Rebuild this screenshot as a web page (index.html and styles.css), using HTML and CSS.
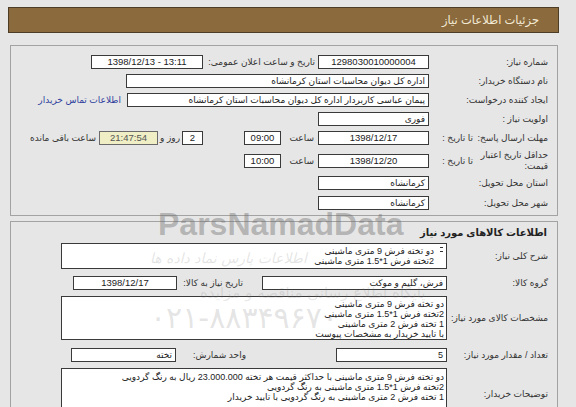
FILE: index.html
```html
<!DOCTYPE html>
<html lang="fa" dir="rtl">
<head>
<meta charset="utf-8">
<title>جزئیات اطلاعات نیاز</title>
<link rel="stylesheet" href="styles.css">
</head>
<body>
<div class="page">
  <div class="header"><span class="title">جزئیات اطلاعات نیاز</span></div>

  <div class="box info">
    <div class="row">
      <div class="lbl">شماره نیاز:</div>
      <div class="field f-short center num">1298030010000004</div>
      <div class="lbl-mid">تاریخ و ساعت اعلان عمومی:</div>
      <div class="field f-pub center num">1398/12/13 - 13:11</div>
    </div>
    <div class="row">
      <div class="lbl">نام دستگاه خریدار:</div>
      <div class="field f-long">اداره کل دیوان محاسبات استان کرمانشاه</div>
    </div>
    <div class="row">
      <div class="lbl">ایجاد کننده درخواست:</div>
      <div class="field f-long2">پیمان عباسی کاربردار اداره کل دیوان محاسبات استان کرمانشاه</div>
      <a class="link">اطلاعات تماس خریدار</a>
    </div>
    <div class="row">
      <div class="lbl">اولویت نیاز :</div>
      <div class="field f-short">فوری</div>
    </div>
    <div class="row row-deadline">
      <div class="lbl split"><span class="main">مهلت ارسال پاسخ:</span><span class="sub">تا تاریخ :</span></div>
      <div class="field f-short center num">1398/12/17</div>
      <div class="saat">ساعت</div>
      <div class="field f-time center num">09:00</div>
      <div class="field f-days center num">2</div>
      <div class="days-lbl">روز و</div>
      <div class="field f-remain center num">21:47:54</div>
      <div class="remain-lbl">ساعت باقی مانده</div>
    </div>
    <div class="row row-tall">
      <div class="lbl split"><span class="main wrap">حداقل تاریخ اعتبار قیمت:</span><span class="sub">تا تاریخ :</span></div>
      <div class="field f-short center num">1398/12/20</div>
      <div class="saat">ساعت</div>
      <div class="field f-time center num">10:00</div>
    </div>
    <div class="row row-loose">
      <div class="lbl">استان محل تحویل:</div>
      <div class="field f-short">کرمانشاه</div>
    </div>
    <div class="row row-loose">
      <div class="lbl">شهر محل تحویل:</div>
      <div class="field f-short">کرمانشاه</div>
    </div>
  </div>

  <div class="box goods">
    <div class="g-title">اطلاعات کالاهای مورد نیاز</div>
    <div class="g-row g-summary">
      <div class="g-lbl">شرح کلی نیاز:</div>
      <div class="area area-summary">
        <div class="line">دو تخته فرش 9 متری ماشینی</div>
        <div class="line">2تخته فرش 1*1.5 متری ماشینی</div>
      </div>
    </div>
    <div class="g-row g-group">
      <div class="g-lbl">گروه کالا:</div>
      <div class="field f-group">فرش، گلیم و موکت</div>
      <div class="lbl-need">تاریخ نیاز به کالا:</div>
      <div class="field f-need center num">1398/12/17</div>
    </div>
    <div class="g-row g-spec">
      <div class="g-lbl">مشخصات کالای مورد نیاز:</div>
      <div class="area area-spec">
        <div class="line">دو تخته فرش 9 متری ماشینی</div>
        <div class="line">2تخته فرش 1*1.5 متری ماشینی</div>
        <div class="line">1 تخته فرش 2 متری ماشینی</div>
        <div class="line">با تایید خریدار به مشخصات پیوست</div>
      </div>
    </div>
    <div class="g-row g-qty">
      <div class="g-lbl">تعداد / مقدار مورد نیاز:</div>
      <div class="field f-qty">5</div>
      <div class="lbl-unit">واحد شمارش:</div>
      <div class="field f-unit">تخته</div>
    </div>
    <div class="g-row g-desc">
      <div class="g-lbl">توضیحات خریدار:</div>
      <div class="area area-desc">
        <div class="line">دو تخته فرش 9 متری ماشینی با حداکثر قیمت هر تخته 23.000.000 ریال به رنگ گردویی</div>
        <div class="line">2تخته فرش 1*1.5 متری ماشینی به رنگ گردویی</div>
        <div class="line">1 تخته فرش 2 متری ماشینی به رنگ گردویی با تایید خریدار</div>
      </div>
    </div>
  </div>

  <div class="wm wm-brand">ParsNamadData</div>
  <div class="wm wm-hand">اطلاعات پارس نماد داده ها</div>
  <div class="wm wm-tag">پایگاه اطلاع رسانی مناقصه و مزایده</div>
  <div class="wm wm-phone">۰۲۱-۸۸۳۴۹۶۷۰</div>
</div>
</body>
</html>
```

FILE: styles.css
```css
* { box-sizing: border-box; }
html, body { margin: 0; padding: 0; }
body {
  background: #e6e6e6;
  font-family: "Liberation Sans", "DejaVu Sans", sans-serif;
  font-size: 9px;
  color: #333;
}
.page {
  position: relative;
  width: 576px;
  height: 407px;
  overflow: hidden;
  padding: 7px 17px 0 8px;
}
.header {
  height: 26px;
  background: #8b6a3e;
  border: 1px solid #4e3d26;
  display: flex;
  align-items: center;
  padding-right: 19px;
  color: #f3ead6;
  font-size: 11.5px;
}
.box {
  margin: 12px 1px 0 2px;
  border: 1px solid #a3a3a3;
}
.info { height: 171px; padding: 6px 9px 0 0; }
.goods { margin-top: 5px; height: 220px; padding: 0 9px 0 0; }

.row { display: flex; align-items: center; height: 19px; }
.row-deadline { height: 20px; }
.row-tall { height: 25px; }
.row-loose { height: 20px; }

.lbl { width: 119px; flex: none; white-space: nowrap; }
.split { display: flex; align-items: center; }
.split .main { width: 74px; flex: none; line-height: 11px; }
.split .wrap { white-space: normal; }
.split .sub { margin-right: 1px; white-space: nowrap; }

.field {
  flex: none;
  height: 14px;
  border: 1px solid #3a3a3a;
  background: #fff;
  line-height: 12px;
  padding: 0 3px;
  white-space: nowrap;
  overflow: hidden;
  color: #222;
}
.center { text-align: center; }
.num { direction: ltr; font-size: 9.5px; }

.f-short { width: 111px; }
.f-pub { width: 112px; }
.f-long { width: 303px; }
.f-long2 { width: 302px; }
.lbl-mid { width: 115px; flex: none; padding-right: 3px; white-space: nowrap; }
.link { margin-right: 6px; color: #2f3f9e; white-space: nowrap; }

.saat { width: 37px; flex: none; padding-right: 4px; }
.f-time { width: 37px; }
.f-days { width: 21px; margin-right: 41px; }
.days-lbl { width: 24px; flex: none; padding-right: 2px; white-space: nowrap; }
.f-remain { width: 59px; background: #efeec4; color: #555; border-color: #6a6a6a; }
.remain-lbl { margin-right: 3px; white-space: nowrap; }

.g-title { height: 21px; display: flex; align-items: center; font-weight: bold; font-size: 10px; padding-right: 1px; color: #222; }
.g-row { display: flex; align-items: center; }
.g-lbl { width: 101px; flex: none; white-space: nowrap; }
.area {
  flex: none;
  width: 386px;
  background: #fff;
  border: 1px solid #3a3a3a;
  padding: 2px 2px 0 0;
  line-height: 10px;
  color: #222;
  overflow: hidden;
}
.area-summary { position: relative; height: 26px; padding-right: 12px; }
.area-summary::before,
.area-summary::after {
  content: "";
  position: absolute;
  right: 3px;
  width: 3px;
  height: 1px;
  background: #333;
}
.area-summary::before { top: 3px; }
.area-summary::after { top: 7px; }
.line { white-space: nowrap; }

.g-group { margin-top: 7px; }
.f-group { width: 185px; }
.lbl-need { width: 85px; flex: none; padding-right: 19px; white-space: nowrap; }
.f-need { width: 104px; }

.g-spec { margin-top: 6px; }
.area-spec { height: 44px; }

.g-qty { margin-top: 8px; }
.f-qty { width: 111px; }
.lbl-unit { width: 160px; flex: none; padding-right: 90px; white-space: nowrap; }
.f-unit { width: 105px; }

.g-desc { margin-top: 6px; }
.area-desc { height: 52px; padding-top: 3px; }

.wm { position: absolute; pointer-events: none; white-space: nowrap; }
.wm-brand {
  left: 158px;
  top: 206px;
  font-family: "Liberation Sans", sans-serif;
  font-weight: bold;
  font-size: 32px;
  color: rgba(110, 110, 110, 0.42);
  direction: ltr;
}
.wm-hand {
  left: 150px;
  top: 250px;
  font-family: "DejaVu Sans", sans-serif;
  font-size: 14px;
  font-style: italic;
  color: rgba(120, 120, 120, 0.2);
}
.wm-tag {
  left: 200px;
  top: 284px;
  font-family: "DejaVu Sans", sans-serif;
  font-size: 15px;
  color: rgba(120, 120, 120, 0.18);
}
.wm-phone {
  left: 150px;
  top: 300px;
  font-family: "DejaVu Sans", sans-serif;
  font-size: 30px;
  color: rgba(120, 120, 120, 0.2);
  direction: ltr;
}
```
